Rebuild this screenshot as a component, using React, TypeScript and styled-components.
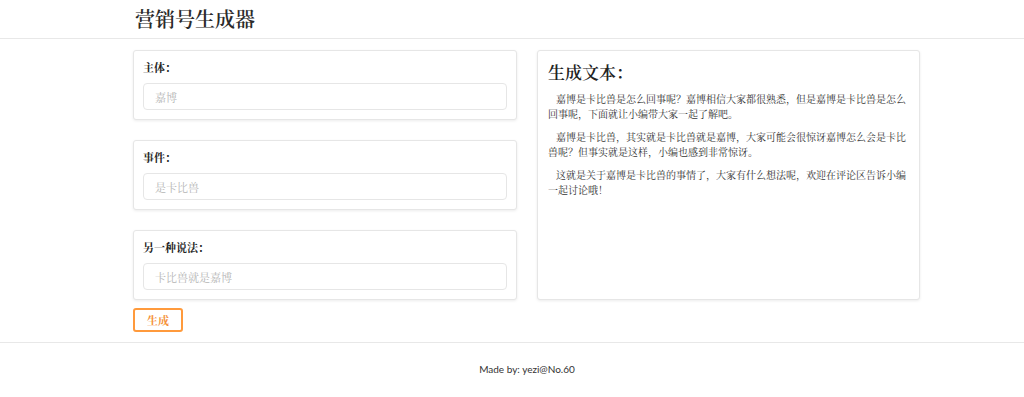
import React from "react";
import styled, { createGlobalStyle } from "styled-components";

const Global = createGlobalStyle`
  html, body { margin: 0; padding: 0; background: #fff; }
  body { font-family: "Noto Serif CJK SC", "Liberation Serif", "Noto Sans CJK SC", serif; color: #222; }
  * { box-sizing: border-box; }
`;

const Header = styled.header`
  height: 39px;
  border-bottom: 1px solid #e8e8e8;
`;

const Container = styled.div`
  width: 787px;
  margin-left: 133px;
`;

const Title = styled.h1`
  margin: 0;
  padding: 6px 0 0 2px;
  font-size: 20px;
  font-weight: 600;
  line-height: 26px;
  color: #2a2a2a;
`;

const Main = styled(Container)`
  display: grid;
  grid-template-columns: 384px 383px;
  column-gap: 20px;
  padding-top: 11px;
  height: 303px;
`;

const Col = styled.div`
  display: flex;
  flex-direction: column;
  gap: 20px;
`;

const Card = styled.div<{ $h?: number }>`
  border: 1px solid #e6e6e6;
  border-radius: 3px;
  box-shadow: 0 1px 3px rgba(0, 0, 0, 0.08);
  background: #fff;
  height: ${(p) => p.$h ?? 70}px;
  padding: 8px 9px;
`;

const Label = styled.div`
  font-size: 11px;
  font-weight: bold;
  line-height: 16px;
  margin-bottom: 8px;
  color: #222;
`;

const Input = styled.input`
  display: block;
  width: 100%;
  height: 27px;
  border: 1px solid #e6e6e6;
  border-radius: 4px;
  padding: 0 11px;
  font-family: inherit;
  font-size: 11px;
  outline: none;
  &::placeholder { color: #b5b5b5; }
`;

const Left = styled(Col)`
  gap: 0;
`;

const Button = styled.button`
  margin-top: 8px;
  width: 50px;
  height: 24px;
  border: 2px solid #ff9a3c;
  border-radius: 3px;
  background: #fff;
  color: #f5923a;
  font-family: inherit;
  font-size: 11px;
  font-weight: bold;
  padding: 0;
`;

const OutCard = styled(Card)`
  padding: 9px 10px;
`;

const OutTitle = styled.h2`
  margin: 0 0 7px;
  font-size: 17px;
  font-weight: 600;
  line-height: 24px;
  color: #222;
`;

const Para = styled.p`
  margin: 0 0 8px;
  font-size: 10px;
  line-height: 15px;
  text-indent: 8px;
  color: #333;
`;

const Footer = styled.footer`
  border-top: 1px solid #e8e8e8;
  text-align: center;
  font-family: Lato, "Liberation Sans", sans-serif;
  font-size: 10px;
  color: #333;
  padding: 20px 0 0 30px;
`;

export default function App() {
  return (
    <>
      <Global />
      <Header>
        <Container>
          <Title>营销号生成器</Title>
        </Container>
      </Header>
      <Main>
        <Left>
          <Col>
            <Card>
              <Label>主体：</Label>
              <Input placeholder="嘉博" />
            </Card>
            <Card>
              <Label>事件：</Label>
              <Input placeholder="是卡比兽" />
            </Card>
            <Card>
              <Label>另一种说法：</Label>
              <Input placeholder="卡比兽就是嘉博" />
            </Card>
          </Col>
          <div>
            <Button>生成</Button>
          </div>
        </Left>
        <div>
          <OutCard $h={250}>
            <OutTitle>生成文本：</OutTitle>
            <Para>嘉博是卡比兽是怎么回事呢？嘉博相信大家都很熟悉，但是嘉博是卡比兽是怎么回事呢，下面就让小编带大家一起了解吧。</Para>
            <Para>嘉博是卡比兽，其实就是卡比兽就是嘉博，大家可能会很惊讶嘉博怎么会是卡比兽呢？但事实就是这样，小编也感到非常惊讶。</Para>
            <Para>这就是关于嘉博是卡比兽的事情了，大家有什么想法呢，欢迎在评论区告诉小编一起讨论哦！</Para>
          </OutCard>
        </div>
      </Main>
      <Footer>Made by: yezi@No.60</Footer>
    </>
  );
}
